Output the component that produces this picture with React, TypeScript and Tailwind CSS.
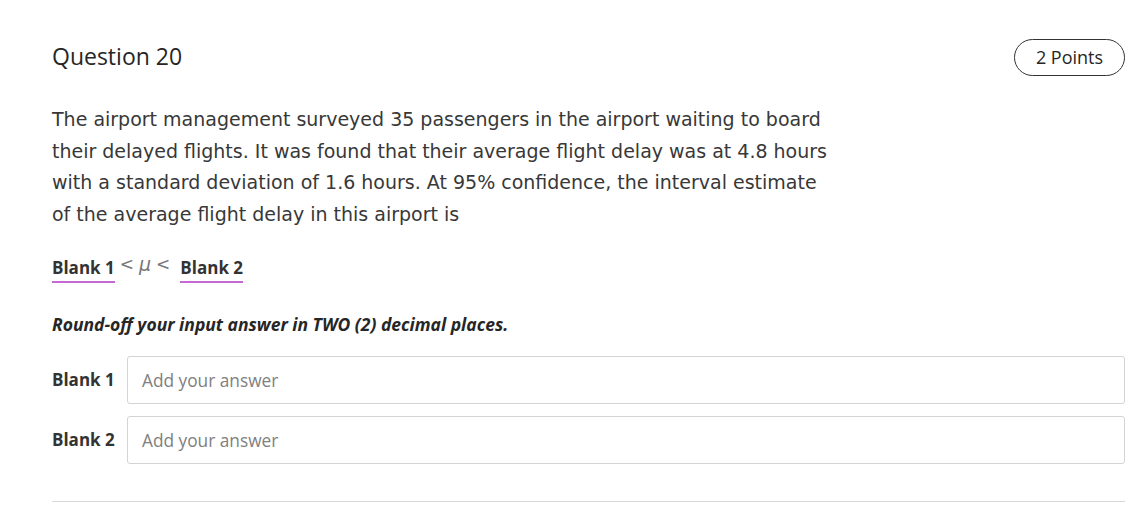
import React from "react";

const lines = [
  "The airport management surveyed 35 passengers in the airport waiting to board",
  "their delayed flights. It was found that their average flight delay was at 4.8 hours",
  "with a standard deviation of 1.6 hours. At 95% confidence, the interval estimate",
  "of the average flight delay in this airport is",
];

function BlankInput({ label }: { label: string }) {
  return (
    <div className="flex items-center">
      <span className="w-[75px] shrink-0 text-[17px] font-bold text-[#333]">{label}</span>
      <input
        className="h-[48px] flex-1 rounded-[3px] border border-[#d4d4d4] px-[14px] text-[17.3px] text-[#333] placeholder:text-[#808080] outline-none"
        placeholder="Add your answer"
      />
    </div>
  );
}

export default function App() {
  return (
    <div className="min-h-[512px] w-full bg-white pl-[52px] pr-[18px] pt-[39px] font-['Open_Sans',sans-serif] text-[#333]">
      <div className="flex items-center justify-between">
        <h2 className="-mt-[3px] text-[23px] leading-[36px] text-[#262626]">Question 20</h2>
        <span className="flex h-[37px] w-[111px] items-center justify-center rounded-full border border-[#333] text-[18px] text-[#262626]">
          2 Points
        </span>
      </div>

      <div className="mt-[28px] font-['DejaVu_Sans',sans-serif] text-[19px] leading-[31.5px] text-[#383838]">
        {lines.map((l) => (
          <div key={l} className="whitespace-nowrap">
            {l}
          </div>
        ))}
      </div>

      <div className="mt-[25px] flex items-end text-[17px] font-bold text-[#333]">
        <span className="border-b-2 border-[#c36bd1] pb-[1px] leading-[24px]">Blank 1</span>
        <span className="ml-[5px] mr-[10px] mb-[10px] flex items-center gap-[5px] font-['DejaVu_Sans',sans-serif] font-normal leading-[18px] text-[#777]">
          <span className="text-[17px]">&lt;</span>
          <span className="text-[19px] italic">μ</span>
          <span className="text-[17px]">&lt;</span>
        </span>
        <span className="border-b-2 border-[#c36bd1] pb-[1px] leading-[24px]">Blank 2</span>
      </div>

      <p className="mt-[29px] text-[17.5px] font-bold italic leading-[24px] text-[#262626]">
        Round-off your input answer in TWO (2) decimal places.
      </p>

      <div className="mt-[20px] flex flex-col gap-[12px]">
        <BlankInput label="Blank 1" />
        <BlankInput label="Blank 2" />
      </div>

      <div className="mt-[37px] border-t border-[#d9d9d9]" />
    </div>
  );
}
